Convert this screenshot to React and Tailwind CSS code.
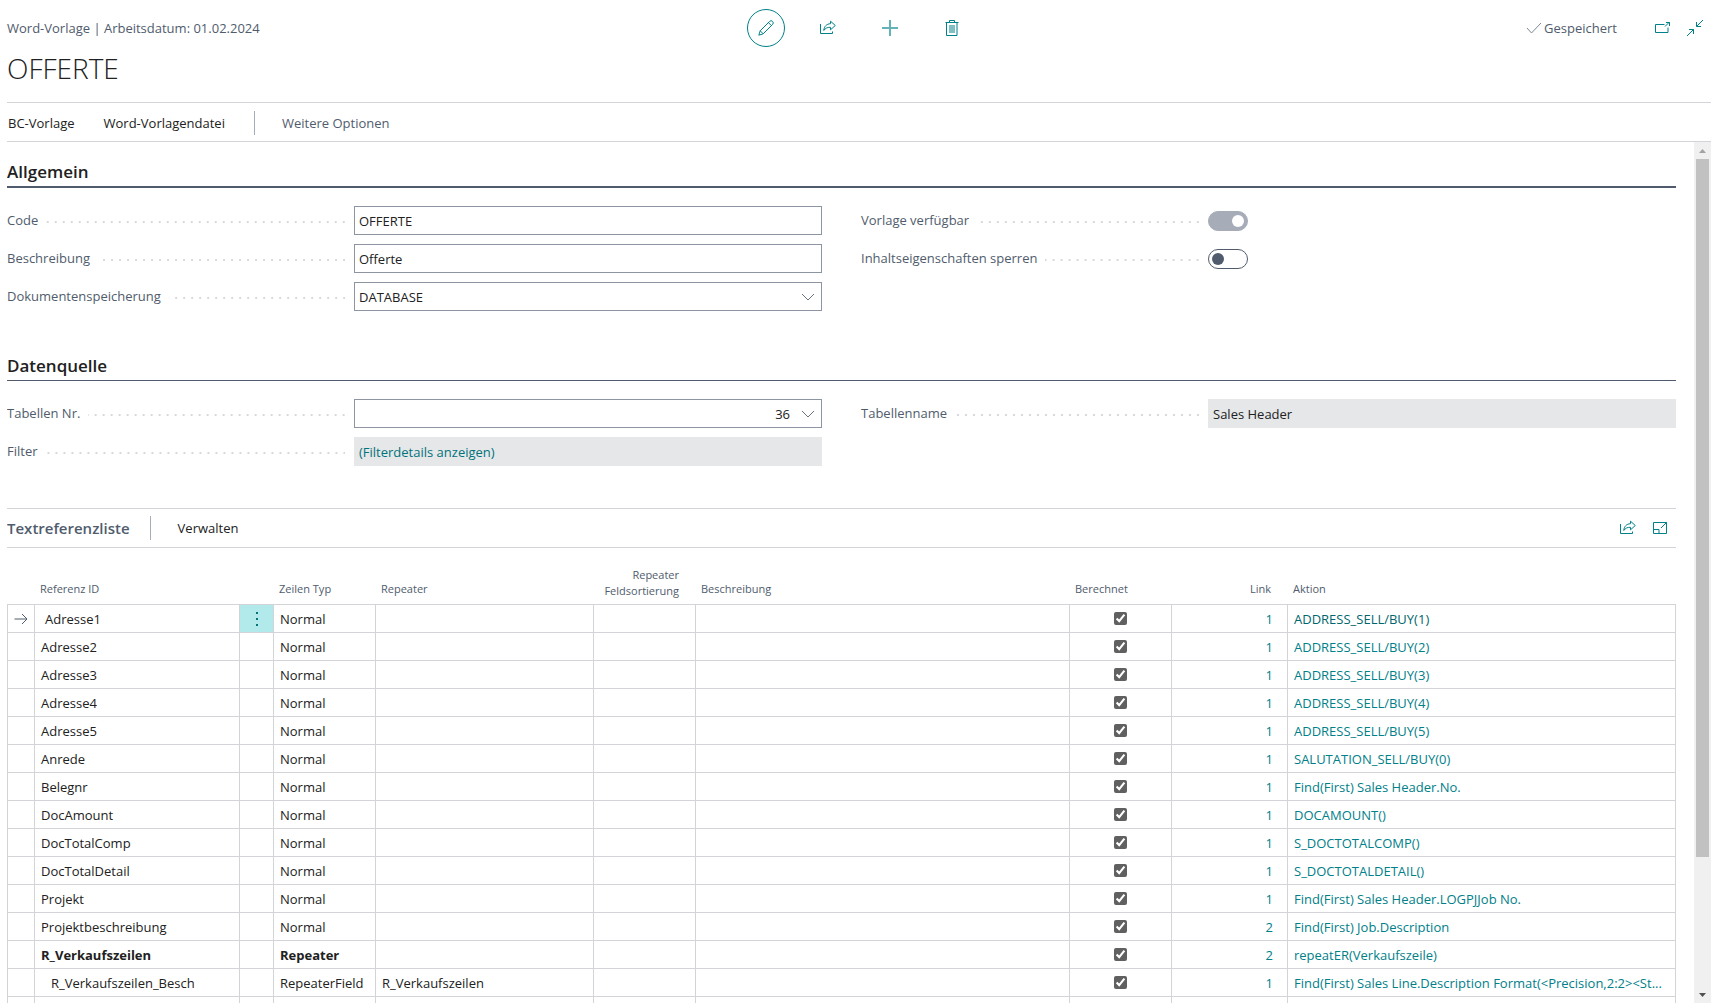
import React from 'react';

const rows = [
  { id: 'Adresse1', type: 'Normal', link: 1, action: 'ADDRESS_SELL/BUY(1)', active: true },
  { id: 'Adresse2', type: 'Normal', link: 1, action: 'ADDRESS_SELL/BUY(2)' },
  { id: 'Adresse3', type: 'Normal', link: 1, action: 'ADDRESS_SELL/BUY(3)' },
  { id: 'Adresse4', type: 'Normal', link: 1, action: 'ADDRESS_SELL/BUY(4)' },
  { id: 'Adresse5', type: 'Normal', link: 1, action: 'ADDRESS_SELL/BUY(5)' },
  { id: 'Anrede', type: 'Normal', link: 1, action: 'SALUTATION_SELL/BUY(0)' },
  { id: 'Belegnr', type: 'Normal', link: 1, action: 'Find(First) Sales Header.No.' },
  { id: 'DocAmount', type: 'Normal', link: 1, action: 'DOCAMOUNT()' },
  { id: 'DocTotalComp', type: 'Normal', link: 1, action: 'S_DOCTOTALCOMP()' },
  { id: 'DocTotalDetail', type: 'Normal', link: 1, action: 'S_DOCTOTALDETAIL()' },
  { id: 'Projekt', type: 'Normal', link: 1, action: 'Find(First) Sales Header.LOGPJJob No.' },
  { id: 'Projektbeschreibung', type: 'Normal', link: 2, action: 'Find(First) Job.Description' },
  { id: 'R_Verkaufszeilen', type: 'Repeater', link: 2, action: 'repeatER(Verkaufszeile)', bold: true },
  {
    id: 'R_Verkaufszeilen_Besch',
    type: 'RepeaterField',
    repeater: 'R_Verkaufszeilen',
    link: 1,
    action: 'Find(First) Sales Line.Description Format(<Precision,2:2><St...',
    indent: true,
  },
];

const Icon = ({ size = 16, children, className = '' }) => (
  <svg
    width={size}
    height={size}
    viewBox={`0 0 ${size} ${size}`}
    fill="none"
    stroke="currentColor"
    className={className}
    aria-hidden="true"
  >
    {children}
  </svg>
);

const PencilIcon = () => (
  <Icon>
    <path d="M0.8 15.2 2.2 10.8 11.6 1.4a2.1 2.1 0 0 1 3 3L5.2 13.8Z" />
    <path d="M2.2 10.8 5.2 13.8M10.4 2.6l3 3" />
  </Icon>
);

const ShareIcon = () => (
  <Icon>
    <path d="M0.5 4v9.5h12V11.5" />
    <path d="M10.5 1.2 15.3 5.5 10.5 9.8V7.3C7.5 7.2 5.5 8 3.8 10.5 4 6.5 6.5 3.9 10.5 3.7Z" />
  </Icon>
);

const PlusIcon = () => (
  <Icon className="opacity-60">
    <path d="M8 0v16M0 8h16" strokeWidth="2" />
  </Icon>
);

const TrashIcon = () => (
  <Icon>
    <path d="M1.5 2.5h13M5.5 2.5v-2h5v2M2.5 2.5v13h10.5v-13M6 5v8M8 5v8M10 5v8" />
  </Icon>
);

const PopOutIcon = () => (
  <Icon>
    <path d="M9.5 4.5h-9v8h12.5V7.5" />
    <path d="M10 6.5 14.5 2M11 2.5h3.5v3.5" />
  </Icon>
);

const CollapseIcon = () => (
  <Icon>
    <path d="M16 0 9.5 6.5M9.5 2v4.5H14" />
    <path d="M0 16 6.5 9.5M2 9.5h4.5V14" />
  </Icon>
);

const ExpandIcon = () => (
  <Icon>
    <path d="M1.5 2.5h13v11h-13zM1.5 9.5h5.5v4" />
    <path d="M9 8 14 3M10.5 2.5h4v4" />
  </Icon>
);

const Chevron = () => (
  <Icon className="pointer-events-none text-[#6b7480]">
    <path d="M2 5l6 6 6-6" />
  </Icon>
);

const Field = ({ id, label, children }) => (
  <div className="flex h-[29px] items-center">
    <div className="flex w-[347px] shrink-0 items-center pr-[9px]">
      <label htmlFor={id} className="pr-2 leading-[21px] text-[#505c6d]">
        {label}
      </label>
      <span className="mt-[3px] h-0.5 grow bg-[linear-gradient(to_left,#d8d9db_2px,transparent_2px)] bg-[length:8px_2px] bg-right" />
    </div>
    {children}
  </div>
);

const Toggle = ({ id, on, disabled }) => (
  <span className="relative flex">
    <input
      id={id}
      type="checkbox"
      role="switch"
      defaultChecked={on}
      disabled={disabled}
      className="h-5 w-10 appearance-none rounded-full border border-[#505c6d] bg-white checked:border-[#a6adb8] checked:bg-[#a6adb8]"
    />
    <span
      className={`pointer-events-none absolute top-1 h-3 w-3 rounded-full ${
        on ? 'right-1 bg-white' : 'left-1 bg-[#505c6d]'
      }`}
    />
  </span>
);

const inputClass = 'h-[29px] w-full min-w-0 border border-[#8c95a1] bg-white px-1 text-[#212121] outline-none';
const readOnlyClass = 'h-[29px] w-full min-w-0 bg-[#e6e7e9] px-[5px] text-left outline-none';

const Header = () => (
  <header>
    <div className="grid grid-cols-[1fr_auto_1fr] items-center pt-[9px]">
      <span className="text-[#505c6d]">Word-Vorlage | Arbeitsdatum: 01.02.2024</span>
      <div className="flex gap-6 text-[#008089]">
        <button aria-label="Bearbeiten" className="flex h-[38px] w-[38px] items-center justify-center rounded-full border border-[#008089]">
          <PencilIcon />
        </button>
        <button aria-label="Teilen" className="flex h-[38px] w-[38px] items-center justify-center">
          <ShareIcon />
        </button>
        <button aria-label="Neu" className="flex h-[38px] w-[38px] items-center justify-center">
          <PlusIcon />
        </button>
        <button aria-label="Löschen" className="flex h-[38px] w-[38px] items-center justify-center">
          <TrashIcon />
        </button>
      </div>
      <div className="flex items-center justify-end pr-2 text-[#008089]">
        <span className="mr-[38px] flex items-center gap-0.5 text-[#505c6d]">
          <Icon className="text-[#7d8794]">
            <path d="M1 8l4.5 5L15 3" />
          </Icon>
          Gespeichert
        </span>
        <button aria-label="In neuem Fenster öffnen" className="mr-4">
          <PopOutIcon />
        </button>
        <button aria-label="Verkleinern">
          <CollapseIcon />
        </button>
      </div>
    </div>
    <h1 className="h-[55px] text-[28px] leading-[42px] font-light text-[#212121]">OFFERTE</h1>
    <nav className="flex h-10 items-center border-y border-[#d2d4d8] pt-0.5 pl-px leading-[22px]">
      <button className="text-[#212121]">BC-Vorlage</button>
      <button className="ml-[29px] text-[#212121]">Word-Vorlagendatei</button>
      <span className="mr-[27px] ml-[29px] h-6 w-px bg-[#a6adb8]" />
      <button className="text-[#505c6d]">Weitere Optionen</button>
    </nav>
  </header>
);

const General = () => (
  <section>
    <h2 className="mt-4 h-[30px] border-b-2 border-[#505c6d] text-[17px] leading-7 font-semibold text-[#212121]">
      Allgemein
    </h2>
    <div className="mt-[18px] grid grid-cols-2 gap-x-[39px]">
      <div className="flex flex-col gap-[9px]">
        <Field id="code" label="Code">
          <input id="code" defaultValue="OFFERTE" className={inputClass} />
        </Field>
        <Field id="description" label="Beschreibung">
          <input id="description" defaultValue="Offerte" className={inputClass} />
        </Field>
        <Field id="storage" label="Dokumentenspeicherung">
          <div className="relative flex w-full items-center">
            <select id="storage" defaultValue="DATABASE" className={`${inputClass} appearance-none`}>
              <option>DATABASE</option>
            </select>
            <span className="pointer-events-none absolute right-1.5">
              <Chevron />
            </span>
          </div>
        </Field>
      </div>
      <div className="flex flex-col gap-[9px]">
        <Field id="available" label="Vorlage verfügbar">
          <Toggle id="available" on disabled />
        </Field>
        <Field id="lock" label="Inhaltseigenschaften sperren">
          <Toggle id="lock" />
        </Field>
      </div>
    </div>
  </section>
);

const DataSource = () => (
  <section>
    <h2 className="mt-[41px] h-[29px] border-b border-[#505c6d] text-[17px] leading-7 font-semibold text-[#212121]">
      Datenquelle
    </h2>
    <div className="mt-[18px] grid grid-cols-2 gap-x-[39px]">
      <div className="flex flex-col gap-[9px]">
        <Field id="tableNo" label="Tabellen Nr.">
          <div className="relative flex w-full items-center">
            <input id="tableNo" defaultValue="36" className={`${inputClass} pr-[31px] text-right`} />
            <button aria-label="Tabelle auswählen" className="absolute right-1.5">
              <Chevron />
            </button>
          </div>
        </Field>
        <Field id="filter" label="Filter">
          <button id="filter" className={`${readOnlyClass} text-[#00737b]`}>
            (Filterdetails anzeigen)
          </button>
        </Field>
      </div>
      <Field id="tableName" label="Tabellenname">
        <input id="tableName" readOnly defaultValue="Sales Header" className={`${readOnlyClass} text-[#212121]`} />
      </Field>
    </div>
  </section>
);

const cell = 'h-7 border-r border-b border-[#d2d4d8] p-0 px-1.5';

const ReferenceTable = () => (
  <table className="w-full table-fixed border-separate border-spacing-0">
    <colgroup>
      <col className="w-7" />
      <col className="w-[205px]" />
      <col className="w-[34px]" />
      <col className="w-[102px]" />
      <col className="w-[218px]" />
      <col className="w-[102px]" />
      <col className="w-[374px]" />
      <col className="w-[102px]" />
      <col className="w-[116px]" />
      <col />
    </colgroup>
    <thead>
      <tr className="h-[57px] text-left align-bottom text-[11px] leading-4 text-[#505c6d] [&>th]:border-b [&>th]:border-[#d2d4d8] [&>th]:px-[5px] [&>th]:font-normal">
        <th />
        <th scope="col" className="pb-[7px]">Referenz ID</th>
        <th />
        <th scope="col" className="pb-[7px]">Zeilen Typ</th>
        <th scope="col" className="pb-[7px]">Repeater</th>
        <th scope="col" className="pb-[5px] text-right">
          <span className="block pr-3">Repeater Feldsortierung</span>
        </th>
        <th scope="col" className="pb-[7px]">Beschreibung</th>
        <th scope="col" className="pb-[7px]">Berechnet</th>
        <th scope="col" className="pb-[7px] text-right">
          <span className="block pr-3">Link</span>
        </th>
        <th scope="col" className="pb-[7px]">Aktion</th>
      </tr>
    </thead>
    <tbody>
      {rows.map(row => (
        <tr key={row.id} className={row.bold ? 'font-bold' : ''}>
          <td className={`${cell} border-l`}>
            {row.active && (
              <Icon size={14} className="text-[#505c6d]">
                <path d="M0.5 7h12.5M8 2l5 5-5 5" />
              </Icon>
            )}
          </td>
          <td className={cell}>
            <span className={row.active ? 'pl-1' : row.indent ? 'pl-2.5' : ''}>{row.id}</span>
          </td>
          <td className={row.active ? `${cell} bg-[#b2e9ea]` : cell}>
            {row.active && (
              <button aria-label="Weitere Optionen anzeigen" className="flex w-full justify-center text-[#00737b]">
                <svg width="4" height="16" fill="currentColor" aria-hidden="true">
                  <path d="M1 1h2v2H1zM1 7h2v2H1zM1 13h2v2H1z" />
                </svg>
              </button>
            )}
          </td>
          <td className={cell}>{row.type}</td>
          <td className={cell}>{row.repeater}</td>
          <td className={cell} />
          <td className={cell} />
          <td className={cell}>
            <input
              type="checkbox"
              defaultChecked
              aria-label={`${row.id} berechnet`}
              className="mx-auto block h-[13px] w-[13px] accent-[#606060]"
            />
          </td>
          <td className={`${cell} text-right font-normal`}>
            <a href="#" className="pr-2 text-[#008089]">
              {row.link}
            </a>
          </td>
          <td className={`${cell} font-normal`}>
            <a href="#" className={`block truncate ${row.active ? 'text-[#00666d]' : 'text-[#008089]'}`}>
              {row.action}
            </a>
          </td>
        </tr>
      ))}
      {/* next record, cut off by the window edge */}
      <tr>
        <td className={`${cell} border-l`} />
        <td className={cell} />
        <td className={cell} />
        <td className={cell} />
        <td className={cell} />
        <td className={cell} />
        <td className={cell} />
        <td className={cell} />
        <td className={cell} />
        <td className={cell} />
      </tr>
    </tbody>
  </table>
);

const References = () => (
  <section className="mt-[42px]">
    <div className="flex h-10 items-center border-y border-[#d2d4d8] leading-[22px]">
      <h2 className="text-[15px] font-semibold text-[#505c6d]">Textreferenzliste</h2>
      <span className="mr-[27px] ml-5 h-6 w-px bg-[#a6adb8]" />
      <button className="text-[#212121]">Verwalten</button>
      <div className="ml-auto flex gap-4 pr-2 text-[#008089]">
        <button aria-label="Liste teilen">
          <ShareIcon />
        </button>
        <button aria-label="Liste maximieren">
          <ExpandIcon />
        </button>
      </div>
    </div>
    <ReferenceTable />
  </section>
);

const ScrollBar = () => (
  <div className="flex w-[17px] shrink-0 flex-col bg-[#f0f0f0]">
    <div className="flex h-[17px] items-center justify-center">
      <svg width="7" height="4" fill="#a3a3a3" aria-hidden="true">
        <path d="M0 4 3.5 0 7 4z" />
      </svg>
    </div>
    <div className="grow">
      <div className="mx-auto h-[84.4%] w-[13px] bg-[#c1c1c1]" />
    </div>
    <div className="flex h-[17px] items-center justify-center">
      <svg width="7" height="4" fill="#505050" aria-hidden="true">
        <path d="M0 0 3.5 4 7 0z" />
      </svg>
    </div>
  </div>
);

const App = () => (
  <div className="flex h-screen flex-col overflow-hidden bg-white pr-[5px] pl-[7px] font-['Open_Sans','Segoe_UI',sans-serif] text-[13px] leading-5 text-[#212121]">
    <Header />
    <div className="flex min-h-0 grow">
      <main className="min-w-0 grow overflow-hidden pr-[18px]">
        <General />
        <DataSource />
        <References />
      </main>
      <ScrollBar />
    </div>
  </div>
);

export default App;
